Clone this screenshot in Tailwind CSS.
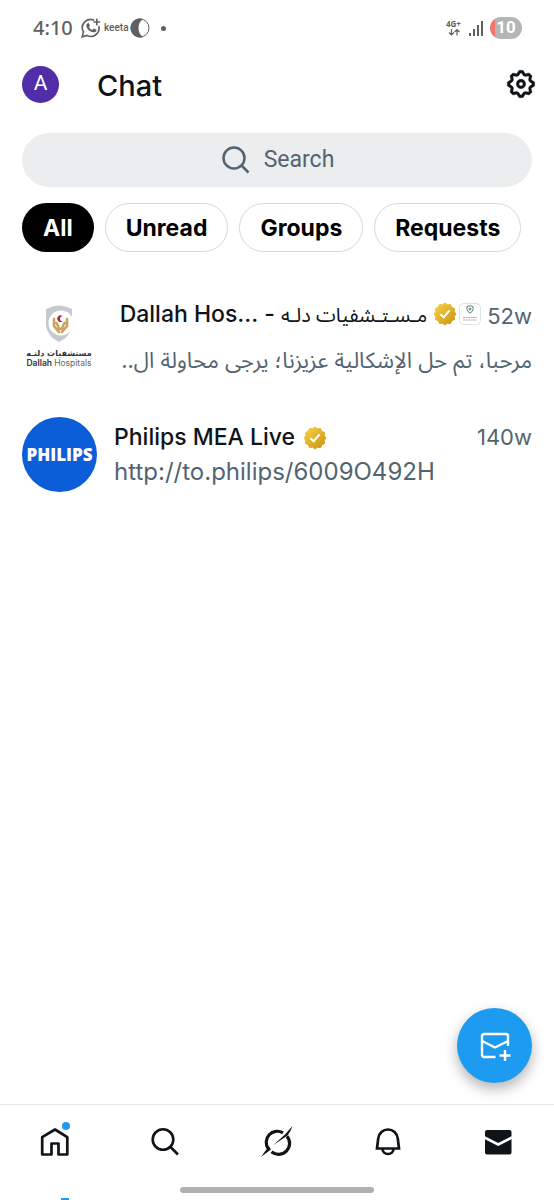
<!DOCTYPE html>
<html lang="en">
<head>
<meta charset="utf-8">
<meta name="viewport" content="width=device-width, initial-scale=1">
<title>Chat</title>
<script src="https://cdn.jsdelivr.net/npm/@tailwindcss/browser@4"></script>
</head>
<body class="bg-white text-[#0f1419] font-['Inter','Noto_Sans_Arabic','DejaVu_Sans',sans-serif]">
<svg class="absolute size-0" aria-hidden="true">
  <defs>
    <linearGradient id="gold" x1="0" y1="0" x2="1" y2="1">
      <stop offset="0" stop-color="#f4d24c"/><stop offset=".5" stop-color="#e3b32a"/><stop offset="1" stop-color="#c98f10"/>
    </linearGradient>
    <symbol id="verified" viewBox="0 0 24 24">
      <path fill="url(#gold)" stroke="url(#gold)" stroke-width="1" stroke-linejoin="round" d="M12 1 14.46 2.82 17.5 2.47 18.72 5.28 21.53 6.5 21.18 9.54 23 12 21.18 14.46 21.53 17.5 18.72 18.72 17.5 21.53 14.46 21.18 12 23 9.54 21.18 6.5 21.53 5.28 18.72 2.47 17.5 2.82 14.46 1 12 2.82 9.54 2.47 6.5 5.28 5.28 6.5 2.47 9.54 2.82Z"/>
      <path fill="none" stroke="#b87f0c" stroke-width="2.2" d="m7.4 13 3.2 3.2 6-6.8" opacity=".6"/>
      <path fill="none" stroke="#fff" stroke-width="2.2" d="m7.4 12.2 3.2 3.2 6-6.8"/>
    </symbol>
  </defs>
</svg>
<div class="flex min-h-screen flex-col">
  <div class="flex h-14 items-center justify-between pl-[33px] pr-8 text-[#606060]">
    <div class="flex items-center">
      <span class="w-12 font-['Noto_Sans',sans-serif] text-[20px] font-medium leading-6">4:10</span>
      <svg class="h-5 w-5" viewBox="0 0 20 20" fill="none" stroke="currentColor" stroke-width="1.6" stroke-linecap="round">
        <path d="M12.6 2.1A8.2 8.2 0 0 0 2.5 13.9L1.2 18.8 6 17.4A8.2 8.2 0 0 0 17.9 8.6"/>
        <path d="M15.8 1.2v5.6M13 4h5.6"/>
        <path stroke="none" fill="currentColor" d="M6.7 5.3c.5-.4 1-.3 1.2.1l.9 1.9c.2.5-.1.8-.8 1.6.7 1.5 1.8 2.5 3.4 3.1l1-1.2c.3-.3.6-.3.9-.1l1.8.9c.5.3.3 1.3-.2 1.9-1 1-2.4 1.1-3.9.5-2.7-1-4.6-2.9-5.5-5.3-.4-1.4-.1-2.6 1.2-3.4Z"/>
      </svg>
      <span class="ml-[3px] w-[25px] font-['Roboto',sans-serif] text-[10px] font-medium leading-4">keeta</span>
      <svg class="ml-px h-5 w-5" viewBox="0 0 20 20"><circle cx="10" cy="10" r="9" fill="none" stroke="currentColor" stroke-width="1"/><path fill="currentColor" d="M13 1A9.5 9.5 0 1 0 13 19C7 15.5 7 4.5 13 1Z"/></svg>
      <span class="ml-[11px] h-[5px] w-[5px] rounded-full bg-current"></span>
    </div>
    <div class="flex items-center">
      <svg class="h-[18px] w-[18px]" viewBox="0 0 18 18" fill="none" stroke="currentColor" stroke-width="1.2">
        <text x="1" y="8" font-family="Open Sans" font-size="8" font-weight="700" fill="currentColor" stroke="none">4G+</text>
        <path d="M6.5 10v6M4 13.5l2.500 2.500 2.500-2.500M12 16.500v-6M9.500 13l2.500-2.500 2.500 2.500"/>
      </svg>
      <svg class="ml-[5px] h-4 w-4" viewBox="0 0 16 16" fill="currentColor"><path d="M1 13h2v3H1zM5 9h2v7H5zM9 5h2v11H9zM13 1h2v15h-2z"/></svg>
      <span class="ml-1.5 flex h-[22px] w-8 items-center justify-center rounded-full bg-[linear-gradient(90deg,#f4756d_5px,#b5b5b5_5px)] font-['Roboto',sans-serif] text-[17px] font-bold text-white">10</span>
    </div>
  </div>

  <header class="flex h-14 items-center px-[22px]">
    <button aria-label="Account" class="flex size-[37px] items-center justify-center rounded-full bg-[#512da8] font-['Roboto',sans-serif] text-[21px] text-white">A</button>
    <h1 class="ml-[38px] pt-1 text-[29px] font-medium leading-8">Chat</h1>
    <button aria-label="Settings" class="-mr-[5px] ml-auto"><svg class="size-8" viewBox="0 0 24 24" fill="currentColor"><path stroke="currentColor" stroke-width=".3" d="M10.540 1.750h2.920l1.570 2.360c.11.17.32.25.53.21l2.530-.59 2.170 2.170-.58 2.540c-.05.2.04.41.21.53l2.360 1.570v2.920l-2.360 1.570c-.17.12-.26.33-.21.53l.58 2.540-2.170 2.170-2.530-.59c-.21-.04-.42.04-.53.21l-1.570 2.360h-2.920l-1.580-2.360c-.11-.17-.32-.25-.52-.21l-2.540.59-2.170-2.170.58-2.540c.05-.2-.03-.41-.21-.53l-2.350-1.570v-2.920L4.100 8.970c.18-.12.26-.33.21-.53L3.730 5.900 5.900 3.730l2.540.59c.2.04.41-.04.52-.21l1.580-2.360zm1.070 2l-.98 1.470C10.050 6.080 9 6.500 7.990 6.270l-1.460-.34-.6.6.33 1.460c.24 1.010-.18 2.070-1.050 2.640l-1.460.98v.78l1.460.98c.87.57 1.290 1.630 1.050 2.640l-.33 1.460.6.6 1.460-.34c1.010-.23 2.060.19 2.640 1.050l.98 1.470h.78l.97-1.470c.58-.86 1.630-1.280 2.650-1.050l1.450.34.61-.6-.34-1.460c-.23-1.010.18-2.070 1.050-2.640l1.470-.98v-.78l-1.470-.98c-.87-.57-1.280-1.630-1.050-2.640l.34-1.460-.61-.6-1.450.34c-1.020.23-2.070-.19-2.650-1.050l-.97-1.470h-.78zM12 10.500c-.83 0-1.500.67-1.500 1.500s.67 1.500 1.500 1.500c.82 0 1.500-.67 1.500-1.500s-.68-1.500-1.500-1.500zM8.500 12c0-1.930 1.560-3.500 3.500-3.500 1.930 0 3.500 1.570 3.500 3.500s-1.570 3.500-3.500 3.500c-1.940 0-3.500-1.570-3.500-3.500z"/></svg></button>
  </header>

  <main class="relative flex grow flex-col px-[22px] pt-[21px]">
    <label class="flex h-[54px] items-center justify-center gap-3 rounded-full bg-[#ebedef] text-[#536471]">
      <svg class="size-8" viewBox="0 0 32 32" fill="none" stroke="currentColor" stroke-width="2.5"><circle cx="14" cy="14" r="10.5"/><path d="m21.500 21.500 7 7"/></svg>
      <input type="search" aria-label="Search" placeholder="Search" class="field-sizing-content bg-transparent font-['Roboto',sans-serif] text-[23px] outline-none placeholder:text-[#536471]">
    </label>

    <div class="mt-4 flex gap-[11px] text-[23px] font-bold leading-6 text-black">
      <button class="h-[49px] rounded-full bg-black px-[21px] text-white">All</button>
      <button class="h-[49px] rounded-full border border-[#cfd9de] px-5">Unread</button>
      <button class="h-[49px] rounded-full border border-[#cfd9de] px-5">Groups</button>
      <button class="h-[49px] rounded-full border border-[#cfd9de] px-5">Requests</button>
    </div>

    <ul class="mt-[41px] flex flex-col gap-9">
      <li><a href="#dallah" class="flex h-[88px] items-center">
        <svg class="size-[75px] shrink-0" viewBox="0 0 75 75" role="img" aria-label="Dallah Hospitals">
          <path fill="#c6c9d0" d="M24 9Q37 2 50 9V26Q48 37 37 42 26 37 24 26Z"/>
          <circle cx="39" cy="23" r="12.500" fill="#fff"/>
          <path fill="#a5273c" d="M40.500 16.200a3.200 3.200 0 1 0 0 5 2.500 2.500 0 1 1 0-5Z"/>
          <path fill="none" stroke="#c9a25c" stroke-width="2.600" stroke-linecap="round" stroke-linejoin="round" d="M32 19v7l5 6M45 19v7l-5 6M34.500 23l3 6M42.500 23l-3 6"/>
          <text x="37" y="56" text-anchor="middle" font-family="DejaVu Sans" font-size="8" font-weight="700" fill="#333" direction="rtl">مستشفيات دلتـه</text>
          <text x="37" y="66" text-anchor="middle" font-family="Inter" font-size="8.500" font-weight="600" fill="#333">Dallah <tspan font-weight="400" fill="#666">Hospitals</tspan></text>
        </svg>
        <div class="ml-4 min-w-0 flex-1">
          <div class="flex h-9 items-center justify-end">
            <span class="whitespace-nowrap text-[23px] font-medium">Dallah Hos... - <bdi class="font-['Noto_Sans_Arabic','DejaVu_Sans',sans-serif] text-[20px] font-normal">مـسـتـشفيات دلـه</bdi></span>
            <svg class="ml-1.5 size-6 shrink-0"><use href="#verified"/></svg>
            <svg class="ml-0.5 size-[22px] shrink-0" viewBox="0 0 22 22"><rect x=".5" y=".5" width="21" height="21" rx="4" fill="#fff" stroke="#dde2e5"/><path d="M8 3.500q3-1.500 6 0v3q-.5 2.500-3 3.500-2.500-1-3-3.500Z" fill="none" stroke="#5e8379"/><circle cx="11" cy="6" r="1.500" fill="#6fa391"/><path d="M4 14.500h14M4 17h14" stroke="#aab2b2" stroke-dasharray="2 .5"/></svg>
            <span class="ml-1.5 pt-1 text-[22px] text-[#536471]">52w</span>
          </div>
          <p dir="rtl" class="mt-2.5 h-9 whitespace-nowrap text-[22px] leading-9 text-[#536471]">مرحبا، تم حل الإشكالية عزيزنا؛ يرجى محاولة ال..</p>
        </div>
      </a></li>
      <li><a href="#philips" class="flex h-[75px] items-center">
        <span class="flex size-[75px] shrink-0 items-center justify-center rounded-full bg-[#0b5ed7] font-['Open_Sans',sans-serif] text-[17px] font-extrabold text-white">PHILIPS</span>
        <div class="ml-[17px] min-w-0 flex-1">
          <div class="flex h-[34px] items-center">
            <span class="text-[23px] font-medium">Philips MEA Live</span>
            <svg class="ml-2 size-6 shrink-0"><use href="#verified"/></svg>
            <span class="ml-auto text-[22px] text-[#536471]">140w</span>
          </div>
          <p class="h-[34px] text-[24px] leading-[34px] text-[#536471]">http://to.philips/6009O492H</p>
        </div>
      </a></li>
    </ul>

    <button aria-label="New message" class="mb-[21px] ml-auto mt-auto flex size-[75px] items-center justify-center rounded-full bg-[#1d9bf0] text-white shadow-[0_6px_14px_rgba(0,0,0,0.3)]">
      <svg class="size-8" viewBox="0 0 32 32" fill="none" stroke="currentColor" stroke-width="2.4"><path d="M16.500 27H5a2 2 0 0 1-2-2V6a2 2 0 0 1 2-2h22a2 2 0 0 1 2 2v10M3 11l13 6.500L29 11"/><path d="M26 20v11M20.500 25.500h11"/></svg>
    </button>
  </main>

  <nav class="grid h-24 grid-cols-5 items-start justify-items-center border-t border-[#e6e9eb] pt-[21px]">
    <a href="#home" aria-label="Home" class="relative">
      <svg class="size-8" viewBox="0 0 32 32" fill="none" stroke="currentColor" stroke-width="2.7" stroke-linejoin="round"><path d="M3.200 11.200 16 3.500l12.300 7.700V28.500H19.500V17.500h-7v11H3.200Z"/></svg>
      <span class="absolute right-px -top-1 size-2 rounded-full bg-[#1d9bf0]"></span>
    </a>
    <a href="#search" aria-label="Search"><svg class="size-8" viewBox="0 0 32 32" fill="none" stroke="currentColor" stroke-width="2.6"><circle cx="13" cy="13.500" r="10.300"/><path d="m20.500 21 7.500 7.500"/></svg></a>
    <a href="#grok" aria-label="Grok"><svg class="size-8" viewBox="0 0 32 32"><path fill="none" stroke="currentColor" stroke-width="3.200" d="M22 6.900A11 11 0 0 0 7.300 22.700M10.500 25.700A11 11 0 0 0 26 10.200"/><path fill="currentColor" d="M0 31Q4 25 8 20.500L10 23.500Q5 27 0 31ZM12.500 19 24 8.500 31.500 0Q29.500 6 26.500 9.500Z"/></svg></a>
    <a href="#notifications" aria-label="Notifications"><svg class="size-8" viewBox="0 0 32 32" fill="none" stroke="currentColor" stroke-width="2.7"><path d="M5 22.500 6.200 12.700C6.800 7 11 3.500 16 3.500s9.200 3.500 9.800 9.200L27 22.500Z"/><path d="M10.500 23a5.500 5 0 0 0 11 0"/></svg></a>
    <a href="#messages" aria-label="Messages"><svg class="size-8" viewBox="0 0 32 32" fill="currentColor"><path d="M2 6a2 2 0 0 1 2-2h22.500a2 2 0 0 1 2 2v4.200L15.200 17 2 10.200Z"/><path d="M2 13.200 15.200 20 28.500 13.200V26.500a2 2 0 0 1-2 2H4a2 2 0 0 1-2-2Z"/></svg></a>
    <div class="col-span-5 mt-[29px] h-1.5 w-[194px] rounded-full bg-[#b0b0b0]"></div>
    <span class="mt-1 ml-5 h-0.5 w-2 bg-[#1d9bf0]"></span>
  </nav>
</div>
</body>
</html>
